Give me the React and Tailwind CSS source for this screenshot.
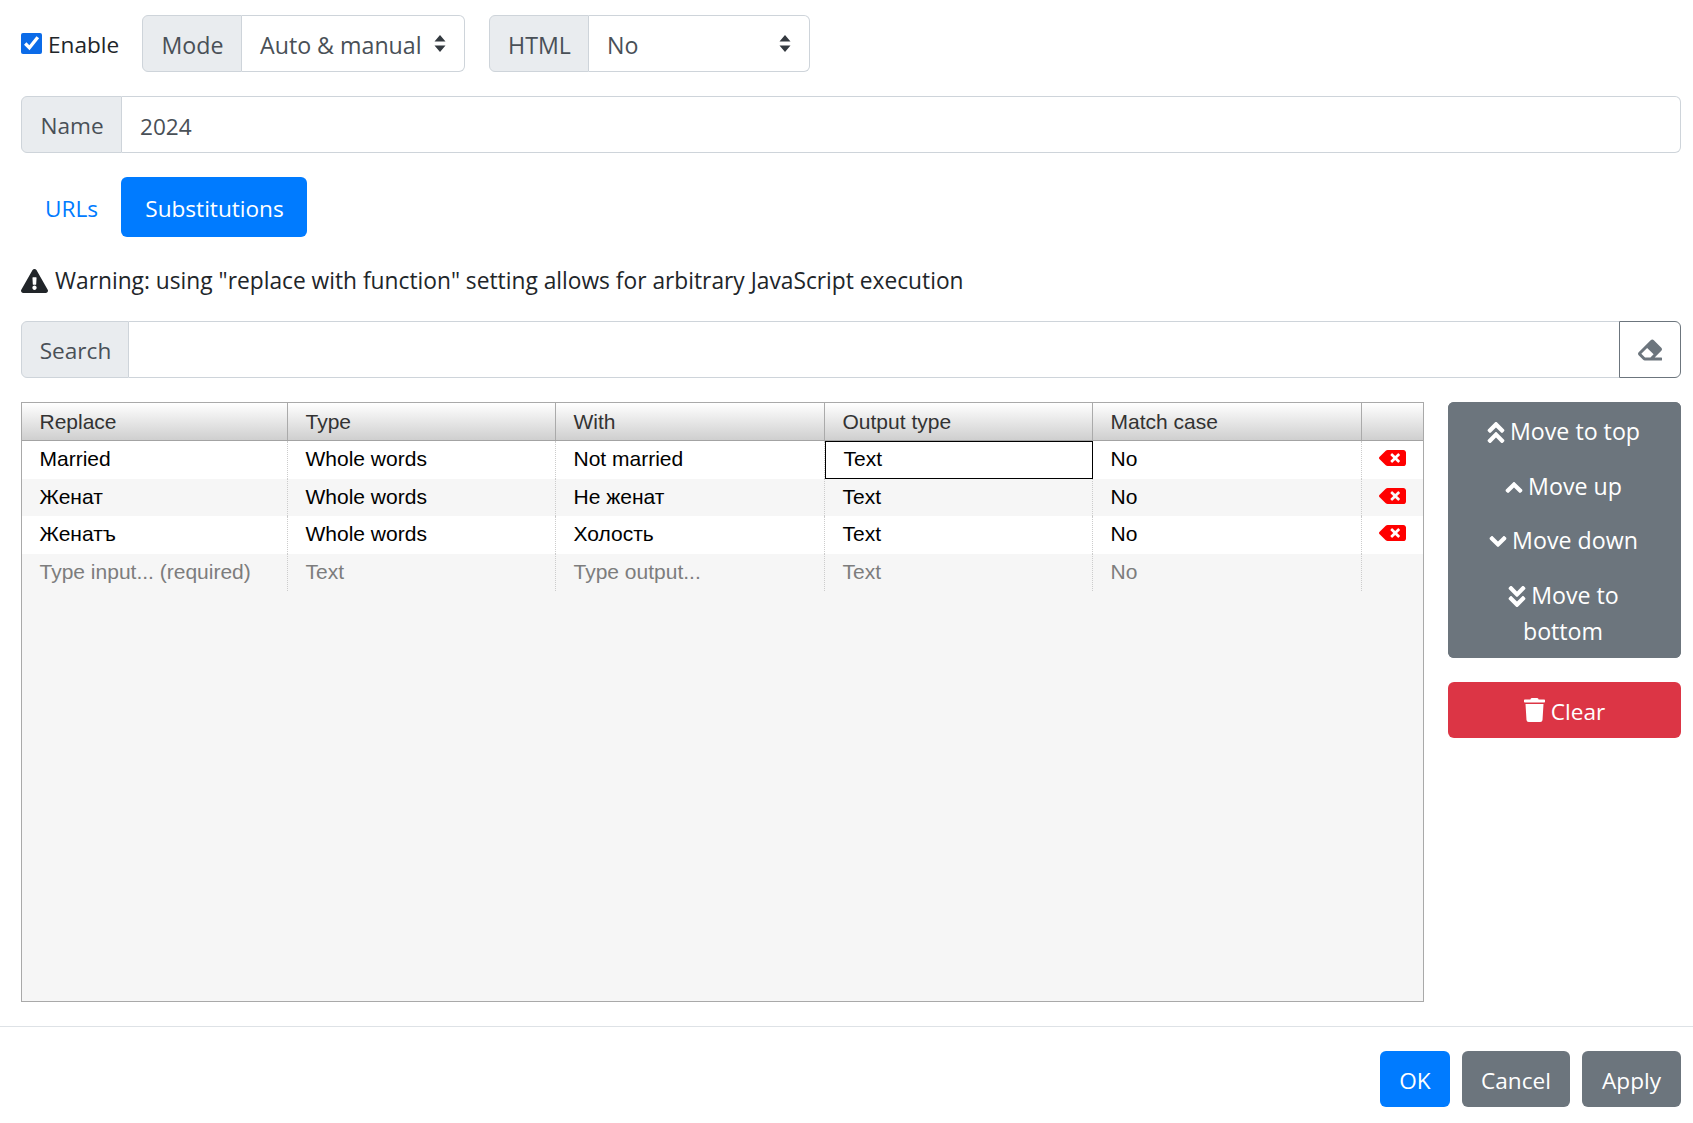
import React from "react";
import { FaExclamationTriangle, FaAngleDoubleUp, FaAngleUp, FaAngleDown, FaAngleDoubleDown, FaTrash, FaEraser, FaBackspace } from "react-icons/fa";

const Arrows = () => (
  <svg width="12" height="17" viewBox="0 0 12 17" className="shrink-0 -mt-[3px] fill-[#343a40]">
    <path d="M6 0 L11.5 6.5 H0.5 Z M6 17 L0.5 10.5 H11.5 Z" />
  </svg>
);

const Label = ({ children, w }) => (
  <div className={`flex items-center justify-center pt-[3px] pl-[1px] bg-[#e9ecef] text-[#495057] border border-[#ced4da] rounded-l-[6px] ${w}`}>{children}</div>
);

const Sel = ({ label, labelW, value, w }) => (
  <div className={`flex h-[57px] text-[23.2px] ${w}`}>
    <Label w={labelW}>{label}</Label>
    <div className="flex-1 flex items-center justify-between pt-[3px] pl-[18px] pr-[18px] border border-l-0 border-[#ced4da] rounded-r-[6px] text-[#495057] bg-white">
      <span>{value}</span>
      <Arrows />
    </div>
  </div>
);

const headers = ["Replace", "Type", "With", "Output type", "Match case", ""];
const rows = [
  ["Married", "Whole words", "Not married", "Text", "No"],
  ["Женат", "Whole words", "Не женат", "Text", "No"],
  ["Женатъ", "Whole words", "Холость", "Text", "No"],
];
const grid = "grid grid-cols-[266px_268px_269px_268px_269px_62px]";

const Cell = ({ children, selected, muted }) => (
  <div className={`h-[37.5px] pl-[17.5px] pb-[2px] flex items-center whitespace-nowrap ${selected ? "border border-black" : "border-r border-dotted border-[#ccc]"} ${muted ? "text-[#7d7d7d]" : "text-black"}`}>
    {children}
  </div>
);

const iconCls = "inline w-[20px] h-[27px] mr-[4px] align-[-6px]";

const SideBtn = ({ icon, children, h }) => (
  <button className={`block w-full text-center leading-[36px] pl-[18px] pr-[21px] pt-[2px] text-white bg-[#6c757d] ${h}`}>
    {icon}
    {children}
  </button>
);

export default function App() {
  return (
    <div className="min-h-[1123px] bg-white text-[#212529] text-[22.6px] font-['Open_Sans','Noto_Sans',sans-serif]">
      <div className="pl-[21px] pr-[12px] pt-[15px]">
        <div className="flex items-center h-[57px]">
          <input type="checkbox" checked readOnly className="w-[21px] h-[21px] m-0 accent-[#0b6be8]" />
          <span className="ml-[6px] w-[72px] pt-[3px]">Enable</span>
          <div className="ml-[22px]"><Sel label="Mode" labelW="w-[100px]" value="Auto & manual" w="w-[323px]" /></div>
          <div className="ml-[24px]"><Sel label="HTML" labelW="w-[100px]" value="No" w="w-[321px]" /></div>
        </div>

        <div className="flex h-[57px] mt-[24px]">
          <Label w="w-[101px]">Name</Label>
          <input readOnly value="2024" className="flex-1 min-w-0 px-[18px] pt-[5px] border border-l-0 border-[#ced4da] rounded-r-[6px] text-[#495057] outline-none" />
        </div>

        <div className="flex h-[60px] mt-[24px]">
          <div className="w-[100px] flex items-center justify-center pt-[3px] pl-[1px] text-[#007bff]">URLs</div>
          <div className="w-[186px] flex items-center justify-center pt-[3px] pl-[1px] bg-[#007bff] text-white rounded-[6px]">Substitutions</div>
        </div>

        <div className="flex items-center h-[36px] mt-[26px]">
          <FaExclamationTriangle className="w-[27px] h-[24px] shrink-0 text-[#212529]" />
          <span className="ml-[7px] whitespace-nowrap text-[22.75px]">Warning: using "replace with function" setting allows for arbitrary JavaScript execution</span>
        </div>

        <div className="flex h-[57px] mt-[22px]">
          <Label w="w-[108px]">Search</Label>
          <input readOnly className="flex-1 min-w-0 border border-x-0 border-[#ced4da] outline-none" />
          <div className="w-[62px] flex items-center justify-center border border-[#6c757d] rounded-r-[6px] bg-white">
            <FaEraser className="w-[24px] h-[24px] text-[#6c757d]" />
          </div>
        </div>

        <div className="flex mt-[24px] items-start">
          <div className="w-[1403px] h-[600px] border border-[#a9a9a9] bg-[#f6f6f6] font-['Liberation_Sans',sans-serif] text-[21px] overflow-hidden">
            <div className={`${grid} h-[38px] bg-linear-to-b from-white to-[#cfcfcf] border-b border-[#a3a3a3] text-[#333]`}>
              {headers.map((h, i) => (
                <div key={i} className="pl-[17.5px] pt-[1px] flex items-center border-r border-[#aaa]">{h}</div>
              ))}
            </div>
            {rows.map((r, i) => (
              <div key={i} className={`${grid} ${i % 2 === 0 ? "bg-white" : "bg-[#f6f6f6]"}`}>
                {r.map((c, j) => (
                  <Cell key={j} selected={i === 0 && j === 3}>{c}</Cell>
                ))}
                <div className="flex items-center justify-center pb-[3px] border-r border-dotted border-[#ccc]">
                  <FaBackspace className="w-[27px] h-[24px] text-[#ff0000]" />
                </div>
              </div>
            ))}
            <div className={grid}>
              {["Type input... (required)", "Text", "Type output...", "Text", "No", ""].map((c, j) => (
                <Cell key={j} muted>{c}</Cell>
              ))}
            </div>
          </div>

          <div className="w-[233px] ml-[24px] shrink-0 text-[23.2px]">
            <div className="rounded-[6px] overflow-hidden bg-[#6c757d]">
              <SideBtn h="h-[56px]" icon={<FaAngleDoubleUp className={iconCls} />}>Move to top</SideBtn>
              <SideBtn h="h-[54px]" icon={<FaAngleUp className={iconCls} />}>Move up</SideBtn>
              <SideBtn h="h-[53px]" icon={<FaAngleDown className={iconCls} />}>Move down</SideBtn>
              <SideBtn h="h-[93px]" icon={<FaAngleDoubleDown className={iconCls} />}>Move to<br />bottom</SideBtn>
            </div>
            <button className="mt-[24px] w-full h-[56px] rounded-[6px] bg-[#dc3545] text-white flex items-center justify-center pt-[3px] text-[22.6px]">
              <FaTrash className="w-[21px] h-[24px] mr-[6px] -mt-[3px]" />Clear
            </button>
          </div>
        </div>
      </div>

      <div className="mt-[24px] border-t border-[#dee2e6] pt-[24px] pr-[12px] flex justify-end gap-[12px]">
        <button className="w-[70px] h-[56px] pt-[3px] rounded-[6px] bg-[#007bff] text-white">OK</button>
        <button className="w-[108px] h-[56px] pt-[3px] rounded-[6px] bg-[#6c757d] text-white">Cancel</button>
        <button className="w-[99px] h-[56px] pt-[3px] rounded-[6px] bg-[#6c757d] text-white">Apply</button>
      </div>
    </div>
  );
}
